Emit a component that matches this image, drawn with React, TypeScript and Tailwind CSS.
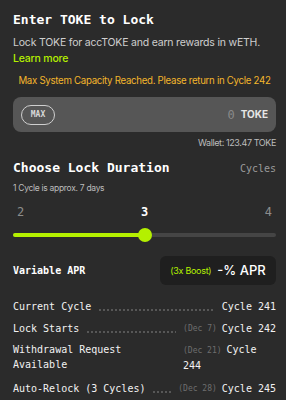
const mono = "font-['DejaVu_Sans_Mono',monospace]";
const sans = "font-['Inter','Liberation_Sans',sans-serif]";

function Dots() {
  return (
    <span className="mx-[7px] mb-[3px] h-[2px] min-w-0 flex-1 bg-[radial-gradient(circle,#707070_0.6px,transparent_0.9px)] bg-[length:4px_2px] bg-repeat-x" />
  );
}

function Row({ label, date, value }: { label: string; date?: string; value: string }) {
  return (
    <div className="flex items-end text-[10px] leading-[14px] text-[#f2f2f2]">
      <span className="shrink-0">{label}</span>
      <Dots />
      {date && <span className="mr-[5px] shrink-0 text-[8px] text-[#6e6e6e]">{date}</span>}
      <span className="shrink-0">{value}</span>
    </div>
  );
}

export default function App() {
  return (
    <div className={`h-[400px] w-[286px] overflow-hidden bg-[#2b2b2b] pl-[13px] pr-[10px] pt-[12px] ${sans}`}>
      <h1 className={`text-[13px] font-bold leading-4 text-white ${mono}`}>Enter TOKE to Lock</h1>
      <p className="mt-[8px] text-[10.5px] leading-[14px] tracking-[-0.2px] text-[#cfcfcf]">
        Lock TOKE for accTOKE and earn rewards in wETH.
      </p>
      <a className="mt-[2px] block text-[10.5px] font-medium leading-[14px] tracking-[-0.2px] text-[#b4f000]">Learn more</a>
      <p className="mt-[8px] text-center text-[9.7px] leading-[14px] tracking-[-0.3px] text-[#f3b62c]">
        Max System Capacity Reached. Please return in Cycle 242
      </p>

      <div className="mt-[9px] flex h-[35px] items-center rounded-[8px] bg-[#565656] pl-[8px] pr-[8px]">
        <button className={`flex h-[20px] w-[34px] items-center justify-center rounded-full border border-[#cfcfcf] text-[8px] font-bold text-[#d8d8d8] ${mono}`}>
          MAX
        </button>
        <span className="flex-1" />
        <span className={`text-[12px] text-[#8a8a8a] ${mono}`}>0</span>
        <span className="ml-[6px] text-[10px] font-bold text-[#e6e6e6]">TOKE</span>
      </div>
      <div className="mt-[5px] text-right text-[9px] leading-[12px] tracking-[-0.4px] text-[#bdbdbd]">Wallet: 123.47 TOKE</div>

      <div className="mt-[11px] flex items-baseline justify-between">
        <h2 className={`text-[13px] font-bold leading-4 text-white ${mono}`}>Choose Lock Duration</h2>
        <span className={`text-[10px] text-[#9a9a9a] ${mono}`}>Cycles</span>
      </div>
      <p className="mt-[6px] text-[8.5px] leading-[12px] tracking-[-0.3px] text-[#bdbdbd]">1 Cycle is approx. 7 days</p>

      <div className={`mt-[10px] flex justify-between px-[4px] text-[12px] leading-4 text-[#8d8d8d] ${mono}`}>
        <span>2</span>
        <span className="font-bold text-white">3</span>
        <span>4</span>
      </div>
      <div className="relative mt-[8px] h-[14px]">
        <div className="absolute left-0 right-0 top-[5px] h-[4px] rounded-full bg-[#454545]" />
        <div className="absolute left-0 top-[5px] h-[4px] w-1/2 rounded-full bg-[#b4f000]" />
        <div className="absolute left-[calc(50%-7px)] top-0 h-[14px] w-[14px] rounded-full bg-[#b4f000]" />
      </div>

      <div className="mt-[14px] flex items-center justify-between">
        <span className={`text-[10px] font-bold text-white ${mono}`}>Variable APR</span>
        <div className="flex h-[29px] w-[116px] items-center justify-center gap-[6px] rounded-[6px] bg-[#1f1f1f]">
          <span className="text-[9px] tracking-[-0.3px] text-[#b4f000]">(3x Boost)</span>
          <span className="text-[13px] font-medium text-white">-% APR</span>
        </div>
      </div>

      <div className={`mt-[15px] flex flex-col ${mono}`}>
        <Row label="Current Cycle" value="Cycle 241" />
        <div className="mt-[8px]">
          <Row label="Lock Starts" date="(Dec 7)" value="Cycle 242" />
        </div>
        <div className="mt-[6px] flex justify-between text-[10px] leading-[15px] text-[#f2f2f2]">
          <span className="w-[130px]">Withdrawal Request Available</span>
          <div className="flex w-[93px] flex-wrap items-baseline gap-x-[5px]">
            <span className="text-[8px] text-[#6e6e6e]">(Dec 21)</span>
            <span>Cycle</span>
            <span>244</span>
          </div>
        </div>
        <div className="mt-[9px]">
          <Row label="Auto-Relock (3 Cycles)" date="(Dec 28)" value="Cycle 245" />
        </div>
      </div>
    </div>
  );
}
